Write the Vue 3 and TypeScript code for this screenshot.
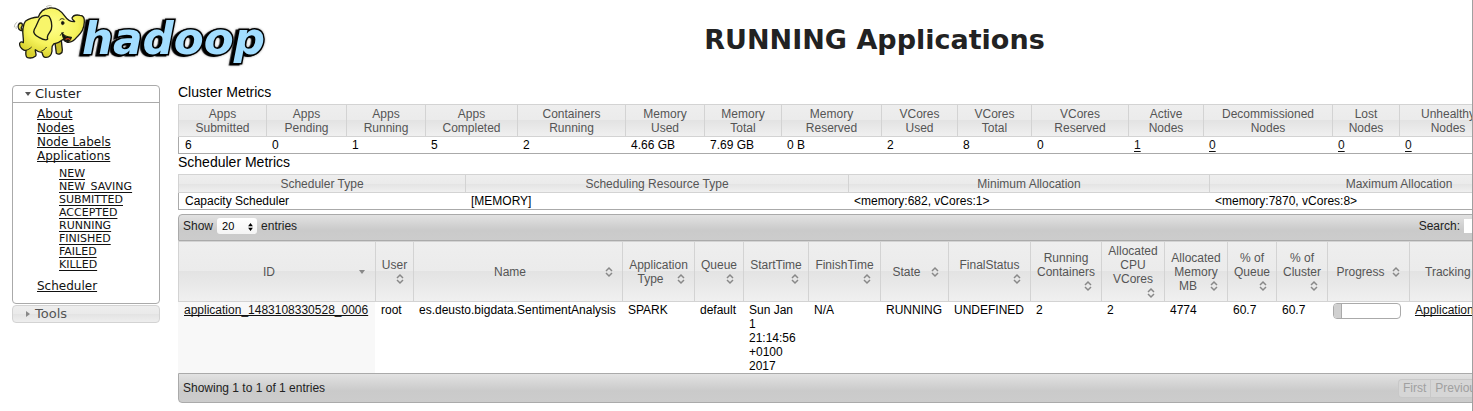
<script setup lang="ts">
import { ref } from 'vue'

interface Metric {
  label: string
  value: string
  width?: number
  link?: boolean
}

interface Column {
  label: string
  width?: number
  sorted?: boolean
}

const clusterLinks = ['About', 'Nodes', 'Node Labels', 'Applications']
const appStates = ['NEW', 'NEW_SAVING', 'SUBMITTED', 'ACCEPTED', 'RUNNING', 'FINISHED', 'FAILED', 'KILLED']

const clusterMetrics: Metric[] = [
  { label: 'Apps Submitted', value: '6', width: 88 },
  { label: 'Apps Pending', value: '0', width: 80 },
  { label: 'Apps Running', value: '1', width: 79 },
  { label: 'Apps Completed', value: '5', width: 92 },
  { label: 'Containers Running', value: '2', width: 108 },
  { label: 'Memory Used', value: '4.66 GB', width: 79 },
  { label: 'Memory Total', value: '7.69 GB', width: 77 },
  { label: 'Memory Reserved', value: '0 B', width: 100 },
  { label: 'VCores Used', value: '2', width: 76 },
  { label: 'VCores Total', value: '8', width: 74 },
  { label: 'VCores Reserved', value: '0', width: 97 },
  { label: 'Active Nodes', value: '1', width: 75, link: true },
  { label: 'Decommissioned Nodes', value: '0', width: 129, link: true },
  { label: 'Lost Nodes', value: '0', width: 67, link: true },
  { label: 'Unhealthy Nodes', value: '0', width: 97, link: true },
  { label: 'Rebooted Nodes', value: '0', link: true },
]

const schedulerMetrics: Metric[] = [
  { label: 'Scheduler Type', value: 'Capacity Scheduler', width: 287 },
  { label: 'Scheduling Resource Type', value: '[MEMORY]', width: 383 },
  { label: 'Minimum Allocation', value: '<memory:682, vCores:1>', width: 361 },
  { label: 'Maximum Allocation', value: '<memory:7870, vCores:8>' },
]

const columns: Column[] = [
  { label: 'ID', width: 197, sorted: true },
  { label: 'User', width: 38 },
  { label: 'Name', width: 209 },
  { label: 'Application Type', width: 72 },
  { label: 'Queue', width: 49 },
  { label: 'StartTime', width: 65 },
  { label: 'FinishTime', width: 72 },
  { label: 'State', width: 68 },
  { label: 'FinalStatus', width: 82 },
  { label: 'Running Containers', width: 71 },
  { label: 'Allocated CPU VCores', width: 63 },
  { label: 'Allocated Memory MB', width: 63 },
  { label: '% of Queue', width: 49 },
  { label: '% of Cluster', width: 51 },
  { label: 'Progress', width: 82 },
  { label: 'Tracking UI', width: 108 },
  { label: 'Blacklisted Nodes' },
]

const apps = [
  {
    id: 'application_1483108330528_0006',
    cells: [
      'root', 'es.deusto.bigdata.SentimentAnalysis', 'SPARK', 'default',
      'Sun Jan 1 21:14:56 +0100 2017', 'N/A', 'RUNNING', 'UNDEFINED',
      '2', '2', '4774', '60.7', '60.7',
    ],
    progress: 10,
    tracking: 'ApplicationMaster',
    blacklisted: '0',
  },
]

const pageSize = ref('20')
const search = ref('')
</script>

<template>
  <div class="page">
    <header class="top">
      <a class="logo" href="#" aria-label="Hadoop">
        <svg viewBox="0 0 831 225" aria-hidden="true">
          <defs>
            <radialGradient id="skin" cx="0.5" cy="0.35" r="0.65">
              <stop offset="0" stop-color="#ffff8c" />
              <stop offset="0.6" stop-color="#f6f35c" />
              <stop offset="1" stop-color="#d8d02c" />
            </radialGradient>
          </defs>
          <text class="word" x="246" y="163">hadoop</text>
          <g stroke="#1c1c14" stroke-width="4" stroke-linejoin="round" stroke-linecap="round">
            <path d="M71 92C58 94 52 84 55 75C58 67 67 67 67 75C67 82 62 80 64 86C66 89 70 88 74 84" fill="#e8e24a" />
            <path d="M165 128L169 160C177 166 188 160 187 150L184 122Z" fill="#c9c02a" />
            <path d="M76 64C86 56 99 52 115 51C120 37 131 26 147 24C166 21 183 31 195 49C201 58 211 66 224 65C221 60 217 61 216 54C220 45 230 44 240 46C251 46 254 55 253 67C252 85 245 99 232 110C224 120 211 129 200 126C195 124 192 121 190 118C181 126 171 130 161 132C153 139 156 145 156 153C154 168 147 173 136 172C128 172 128 164 126 157C118 157 111 153 106 149C104 154 111 162 107 168C99 174 88 175 81 172C76 168 77 160 78 152C69 151 60 143 59 135C57 127 63 123 70 128C72 115 66 103 69 85C70 77 71 70 76 64Z" fill="url(#skin)" />
            <path d="M119 55C113 65 109 80 103 88C98 97 105 107 117 112C129 119 139 122 143 117C138 106 150 100 154 88C157 73 154 59 147 49C136 44 126 46 119 55Z" fill="#f8f56a" />
            <path d="M186 99C193 110 204 111 214 112C212 121 203 128 195 121C190 116 188 108 186 99Z" fill="#16130c" />
            <path d="M198 118C202 114 208 116 210 119" stroke="#c43d20" fill="none" />
            <path d="M181 106C183 101 186 99 190 98M179 60C183 54 190 55 193 59M139 142C135 148 130 151 125 153M77 151C84 150 90 146 94 142" fill="none" stroke-width="3" />
            <ellipse cx="188" cy="69" rx="4" ry="5" fill="#111" stroke-width="2" />
          </g>
          <path d="M43 82C43 75 47 69 52 66M49 87C48 84 48 82 49 79M138 21C144 16 150 16 155 18M136 29C139 25 142 24 145 23" fill="none" stroke="#99998c" stroke-width="2" />
        </svg>
      </a>
      <h1>RUNNING Applications</h1>
    </header>

    <div class="body">
      <nav class="side">
        <section class="panel">
          <button class="panel-head open" type="button">
            <svg class="caret" viewBox="0 0 8 8" aria-hidden="true"><path d="M1 2h6L4 6z" /></svg>
            <span>Cluster</span>
          </button>
          <ul class="links">
            <li v-for="link in clusterLinks" :key="link">
              <a href="#">{{ link }}</a>
              <ul v-if="link === 'Applications'" class="states">
                <li v-for="state in appStates" :key="state"><a href="#">{{ state }}</a></li>
              </ul>
            </li>
            <li><a href="#">Scheduler</a></li>
          </ul>
        </section>
        <button class="panel-head closed" type="button">
          <svg class="caret" viewBox="0 0 8 8" aria-hidden="true"><path d="M2 1v6l4-3z" /></svg>
          <span>Tools</span>
        </button>
      </nav>

      <main class="content">
        <h2>Cluster Metrics</h2>
        <table class="metrics">
          <colgroup><col v-for="m in clusterMetrics" :key="m.label" :width="m.width" /></colgroup>
          <thead>
            <tr>
              <th v-for="m in clusterMetrics" :key="m.label" scope="col">
                <span v-for="word in m.label.split(' ')" :key="word" class="line">{{ word }}</span>
              </th>
            </tr>
          </thead>
          <tbody>
            <tr>
              <td v-for="m in clusterMetrics" :key="m.label">
                <a v-if="m.link" class="count" href="#">{{ m.value }}</a>
                <template v-else>{{ m.value }}</template>
              </td>
            </tr>
          </tbody>
        </table>

        <h2>Scheduler Metrics</h2>
        <table class="metrics">
          <colgroup><col v-for="m in schedulerMetrics" :key="m.label" :width="m.width" /></colgroup>
          <thead>
            <tr><th v-for="m in schedulerMetrics" :key="m.label" scope="col">{{ m.label }}</th></tr>
          </thead>
          <tbody>
            <tr><td v-for="m in schedulerMetrics" :key="m.label">{{ m.value }}</td></tr>
          </tbody>
        </table>

        <div class="bar bar-top">
          <div class="length">
            <label for="size">Show</label>
            <span class="select">
              <select id="size" v-model="pageSize">
                <option>20</option>
                <option>40</option>
                <option>60</option>
              </select>
              <svg viewBox="0 0 6 10" aria-hidden="true"><path d="M3 0l3 4H0zM3 10L0 6h6z" /></svg>
            </span>
            <span>entries</span>
          </div>
          <div class="search">
            <label for="search">Search:</label>
            <input id="search" v-model="search" type="text" />
          </div>
        </div>

        <table class="apps">
          <colgroup><col v-for="c in columns" :key="c.label" :width="c.width" /></colgroup>
          <thead>
            <tr>
              <th v-for="c in columns" :key="c.label" scope="col">
                {{ c.label }}
                <svg class="sort" viewBox="0 0 16 14" aria-hidden="true">
                  <path v-if="c.sorted" class="solid" d="M5 5h6L8 9z" />
                  <path v-else d="M5 6L8 3L11 6M5 8L8 11L11 8" />
                </svg>
              </th>
            </tr>
          </thead>
          <tbody>
            <tr v-for="app in apps" :key="app.id">
              <td class="sorted"><a href="#">{{ app.id }}</a></td>
              <td v-for="(cell, i) in app.cells" :key="i">{{ cell }}</td>
              <td>
                <div class="progress" role="progressbar" aria-label="Progress" :aria-valuenow="app.progress">
                  <div class="fill" :style="{ width: app.progress + '%' }"></div>
                </div>
              </td>
              <td><a href="#">{{ app.tracking }}</a></td>
              <td>{{ app.blacklisted }}</td>
            </tr>
          </tbody>
        </table>

        <div class="bar bar-bottom">
          <span>Showing 1 to 1 of 1 entries</span>
          <div class="pager">
            <button type="button" disabled>First</button>
            <button type="button" disabled>Previous</button>
            <button type="button" disabled>1</button>
            <button type="button" disabled>Next</button>
          </div>
        </div>
      </main>
    </div>
  </div>
</template>

<style>
body {
  margin: 0;
  background: #fff;
}
</style>

<style scoped>
.page {
  overflow: hidden;
  padding-bottom: 8px;
  border-right: 1px solid #a0a0a0;
  font: 12px/14px "Liberation Sans", Arial, sans-serif;
  color: #000;
}

.top {
  display: flex;
  align-items: center;
  height: 80px;
}

.logo {
  width: 277px;
  height: 80px;
}

.logo svg {
  display: block;
  width: 277px;
  height: 75px;
}

.word {
  font: italic bold 131px "DejaVu Sans", Verdana, sans-serif;
  fill: #a2ddff;
  stroke: #000;
  stroke-width: 9px;
  stroke-linejoin: miter;
  paint-order: stroke;
  filter: drop-shadow(-8px 3px 0 #000) drop-shadow(0 0 3px #999);
}

h1 {
  flex: 1;
  margin: 0;
  font: bold 27px/32px "DejaVu Sans", Verdana, sans-serif;
  color: #222;
  text-align: center;
}

.body {
  display: flex;
  align-items: flex-start;
  gap: 18px;
  padding: 4px 0 0 12px;
}

.side {
  flex: none;
  width: 148px;
  padding-top: 1px;
  font-family: "DejaVu Sans", Verdana, sans-serif;
}

.panel {
  border: 1px solid #aaa;
  border-radius: 4px;
}

.panel-head {
  display: flex;
  align-items: center;
  gap: 3px;
  width: 100%;
  height: 17px;
  padding: 0 0 0 11px;
  border: 0;
  background: none;
  font: 13px/16px "DejaVu Sans", Verdana, sans-serif;
  color: #222;
}

.panel-head.open {
  border-bottom: 1px solid #aaa;
}

.panel-head.closed {
  height: 18px;
  margin-top: 1px;
  border: 1px solid #d3d3d3;
  border-radius: 4px;
  background: linear-gradient(#eee, #eaeaea 50%, #e3e3e3 50%, #eee);
  color: #555;
}

.caret {
  width: 8px;
  height: 8px;
  fill: #555;
}

.closed .caret {
  fill: #888;
}

.links,
.states {
  margin: 0;
  padding: 0;
  list-style: none;
}

.links {
  padding: 4px 0 10px 24px;
}

.states {
  margin: 4px 0 8px;
  padding-left: 22px;
  font-size: 11px;
  line-height: 13px;
}

a {
  color: #111;
  text-decoration: underline 1px;
  text-decoration-skip-ink: none;
  text-underline-offset: 1px;
}

.states a,
.count {
  text-underline-offset: 2px;
}

.content {
  flex: 1;
  min-width: 1410px;
}

h2 {
  margin: 0;
  padding: 0 0 4px;
  font-size: 14px;
  font-weight: normal;
  line-height: 16px;
}

table {
  width: 100%;
  table-layout: fixed;
  border-collapse: separate;
  border-spacing: 0;
}

th {
  padding: 2px 5px 1px;
  border: solid #d3d3d3;
  border-width: 1px 0 1px 1px;
  background: linear-gradient(#eee, #ebebeb 50%, #e3e3e3 50%, #f0f0f0);
  font-weight: normal;
  color: #555;
  text-align: center;
}

td {
  padding: 1px 5px 1px 6px;
  text-align: left;
  vertical-align: top;
}

.line {
  display: block;
}

.metrics td {
  border-bottom: 1px solid #aaa;
}

.metrics td:first-child {
  border-left: 1px solid #aaa;
}

.bar {
  display: flex;
  align-items: center;
  justify-content: space-between;
  border: 1px solid #aaa;
  background: linear-gradient(#e2e2e2, #cacaca 60%, #ccc);
  color: #222;
}

.bar-top {
  height: 22px;
  margin-top: 4px;
  padding: 0 5px 3px 4px;
  border-radius: 4px 4px 0 0;
}

.bar-bottom {
  height: 28px;
  padding: 0 5px 0 4px;
  border-radius: 0 0 4px 4px;
}

.length,
.search {
  display: flex;
  align-items: center;
  gap: 4px;
}

.select {
  position: relative;
}

select {
  display: block;
  width: 40px;
  height: 16px;
  padding: 0 5px;
  border: 0;
  border-radius: 3px;
  appearance: none;
  background: linear-gradient(#fff, #f4f4f4);
  font: 11px/16px "Liberation Sans", Arial, sans-serif;
  color: #000;
}

.select svg {
  position: absolute;
  top: 5px;
  right: 4px;
  width: 5px;
  height: 8px;
  pointer-events: none;
}

.search input {
  box-sizing: border-box;
  width: 118px;
  height: 14px;
  padding: 0 2px;
  border: 0;
  background: #fff;
}

.sort {
  float: right;
  width: 16px;
  height: 14px;
  fill: none;
  stroke: #888;
  stroke-width: 1.5px;
}

.solid {
  fill: #888;
  stroke: none;
}

.apps td {
  padding: 1px 8px 0 6px;
}

.apps td.sorted {
  background: #f8f8f8;
}

.progress {
  height: 14px;
  overflow: hidden;
  border: 1px solid #aaa;
  border-radius: 4px;
  background: #fff;
}

.fill {
  height: 100%;
  border-right: 1px solid #aaa;
  background: #d0d0d0;
}

.pager {
  display: flex;
  width: 184px;
}

.pager button {
  flex: none;
  height: 19px;
  padding: 0 4px;
  border: 1px solid #c8c8c8;
  border-right-width: 0;
  background: #d6d6d6;
  font: 12px/14px "Liberation Sans", Arial, sans-serif;
  color: #a0a0a0;
}

.pager button:first-child {
  border-radius: 4px 0 0 4px;
}

.pager button:last-child {
  border-right-width: 1px;
  border-radius: 0 4px 4px 0;
}
</style>
